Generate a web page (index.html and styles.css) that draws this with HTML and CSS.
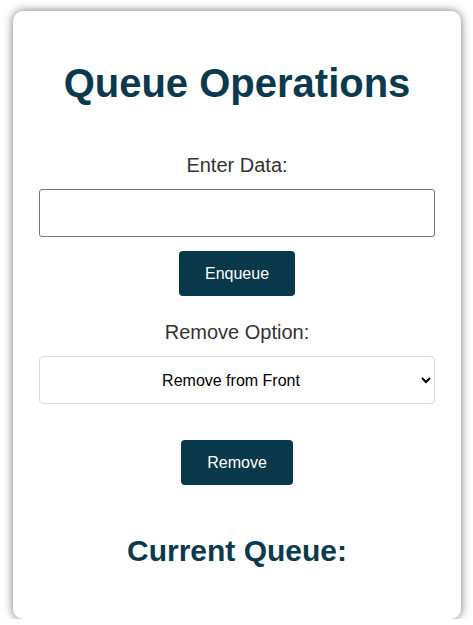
FILE: index.html
```html
<!DOCTYPE html>
<html lang="en">
<head>
<meta charset="utf-8">
<title>Queue Operations</title>
<link rel="stylesheet" href="styles.css">
</head>
<body>
<div class="card">
  <h1 class="title">Queue Operations</h1>
  <label class="label" for="data">Enter Data:</label>
  <input class="field" id="data" type="text">
  <button class="btn btn-enqueue" type="button">Enqueue</button>
  <label class="label label-remove" for="opt">Remove Option:</label>
  <select class="select" id="opt">
    <option>Remove from Front</option>
    <option>Remove from Rear</option>
  </select>
  <button class="btn btn-remove" type="button">Remove</button>
  <h2 class="subtitle">Current Queue:</h2>
  <div class="queue"></div>
</div>
</body>
</html>
```
FILE: styles.css
```css
html, body {
  margin: 0;
  padding: 0;
  background: #ffffff;
}
body {
  font-family: "Liberation Sans", Arial, sans-serif;
  display: flow-root;
}
.card {
  display: flow-root;
  margin: 11px 0 0 13px;
  width: 448px;
  height: 608px;
  box-sizing: border-box;
  padding: 0 26px;
  background: #ffffff;
  border-radius: 10px;
  box-shadow: 0 0 10px rgba(0, 0, 0, 0.55);
  text-align: center;
}
.title {
  margin: 49px 0 0;
  font-size: 40px;
  line-height: 46px;
  font-weight: bold;
  color: #0b3a4e;
}
.label {
  display: block;
  margin-top: 48px;
  font-size: 20px;
  line-height: 23px;
  color: #333333;
}
.label-remove {
  margin-top: 25px;
}
.field {
  display: block;
  margin: 12px 0 0;
  width: 100%;
  height: 48px;
  box-sizing: border-box;
  border: 1px solid #767676;
  border-radius: 3px;
  padding: 10px;
  font-family: "Liberation Sans", Arial, sans-serif;
  font-size: 16px;
}
.btn {
  display: block;
  margin: 14px auto 0;
  padding: 13px 26px;
  border: none;
  border-radius: 4px;
  background: #08384a;
  color: #ffffff;
  font-family: "Liberation Sans", Arial, sans-serif;
  font-size: 16px;
  line-height: 19px;
}
.btn-remove {
  margin-top: 36px;
}
.select {
  display: block;
  margin: 12px 0 0;
  width: 100%;
  height: 48px;
  box-sizing: border-box;
  border: 1px solid #dddddd;
  border-radius: 4px;
  padding: 0 10px;
  background: #ffffff;
  color: #000000;
  font-family: "Liberation Sans", Arial, sans-serif;
  font-size: 16px;
  text-align: center;
  text-align-last: center;
}
.subtitle {
  margin: 49px 0 0;
  font-size: 30px;
  line-height: 34px;
  font-weight: bold;
  color: #0b3a4e;
}
```
